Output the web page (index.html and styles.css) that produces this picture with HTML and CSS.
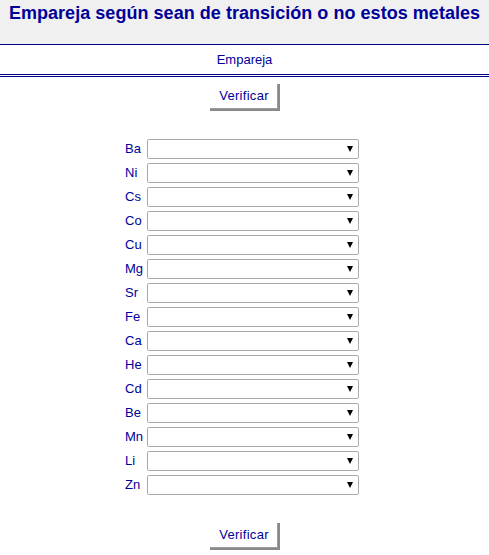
FILE: index.html
```html
<!DOCTYPE html>
<html lang="es">
<head>
<meta charset="utf-8">
<title>Empareja</title>
<link rel="stylesheet" href="styles.css">
</head>
<body>
<header class="title-bar">
  <h2 class="title">Empareja según sean de transición o no estos metales</h2>
</header>
<div class="subtitle">Empareja</div>
<div class="btn-row top"><button class="check">Verificar</button></div>
<div class="match">
  <span class="lbl">Ba</span><div class="sel"><select></select></div>
  <span class="lbl">Ni</span><div class="sel"><select></select></div>
  <span class="lbl">Cs</span><div class="sel"><select></select></div>
  <span class="lbl">Co</span><div class="sel"><select></select></div>
  <span class="lbl">Cu</span><div class="sel"><select></select></div>
  <span class="lbl">Mg</span><div class="sel"><select></select></div>
  <span class="lbl">Sr</span><div class="sel"><select></select></div>
  <span class="lbl">Fe</span><div class="sel"><select></select></div>
  <span class="lbl">Ca</span><div class="sel"><select></select></div>
  <span class="lbl">He</span><div class="sel"><select></select></div>
  <span class="lbl">Cd</span><div class="sel"><select></select></div>
  <span class="lbl">Be</span><div class="sel"><select></select></div>
  <span class="lbl">Mn</span><div class="sel"><select></select></div>
  <span class="lbl">Li</span><div class="sel"><select></select></div>
  <span class="lbl">Zn</span><div class="sel"><select></select></div>
</div>
<div class="btn-row bottom"><button class="check">Verificar</button></div>
</body>
</html>
```
FILE: styles.css
```css
html, body {
  margin: 0;
  padding: 0;
  background: #ffffff;
  font-family: "Liberation Sans", Arial, sans-serif;
  color: #000080;
}
.title-bar {
  background: #f0f0f0;
  height: 44px;
  border-bottom: 1px solid #000080;
  box-sizing: content-box;
}
.title {
  margin: 0;
  padding-top: 2px;
  font-size: 18px;
  letter-spacing: 0.04px;
  white-space: nowrap;
  font-weight: bold;
  line-height: 22px;
  text-align: center;
  color: #000099;
}
.subtitle {
  font-size: 13px;
  line-height: 15px;
  padding: 7px 0 7px;
  text-align: center;
  color: #000099;
  border-bottom: 3px double #000080;
}
.btn-row {
  display: flex;
  justify-content: center;
}
.btn-row.top {
  margin-top: 7px;
}
.btn-row.bottom {
  margin-top: 28px;
}
.check {
  font-family: "Liberation Sans", Arial, sans-serif;
  font-size: 13px;
  letter-spacing: 0.3px;
  color: #000099;
  background: #ffffff;
  height: 27px;
  padding: 0 9px 2px 9px;
  border: none;
  border-right: 2px solid #8a8a8a;
  border-bottom: 2px solid #8a8a8a;
  box-shadow: inset -1px -1px 0 #9c9c9c;
  margin-left: 1px;
}
.match {
  display: grid;
  grid-template-columns: 20px 212px;
  column-gap: 2px;
  row-gap: 4px;
  justify-content: center;
  margin-top: 28px;
  padding-right: 5px;
}
.lbl {
  font-size: 13px;
  line-height: 20px;
  color: #000099;
}
.sel {
  position: relative;
  height: 20px;
}
.sel select {
  -webkit-appearance: none;
  appearance: none;
  display: block;
  width: 212px;
  height: 20px;
  margin: 0;
  border: 1px solid #a9a9a9;
  border-radius: 2px;
  background: #ffffff;
  box-sizing: border-box;
}
.sel::after {
  content: "";
  position: absolute;
  right: 6px;
  top: 7px;
  width: 0;
  height: 0;
  border-left: 3px solid transparent;
  border-right: 3px solid transparent;
  border-top: 6px solid #000000;
  pointer-events: none;
}
```
